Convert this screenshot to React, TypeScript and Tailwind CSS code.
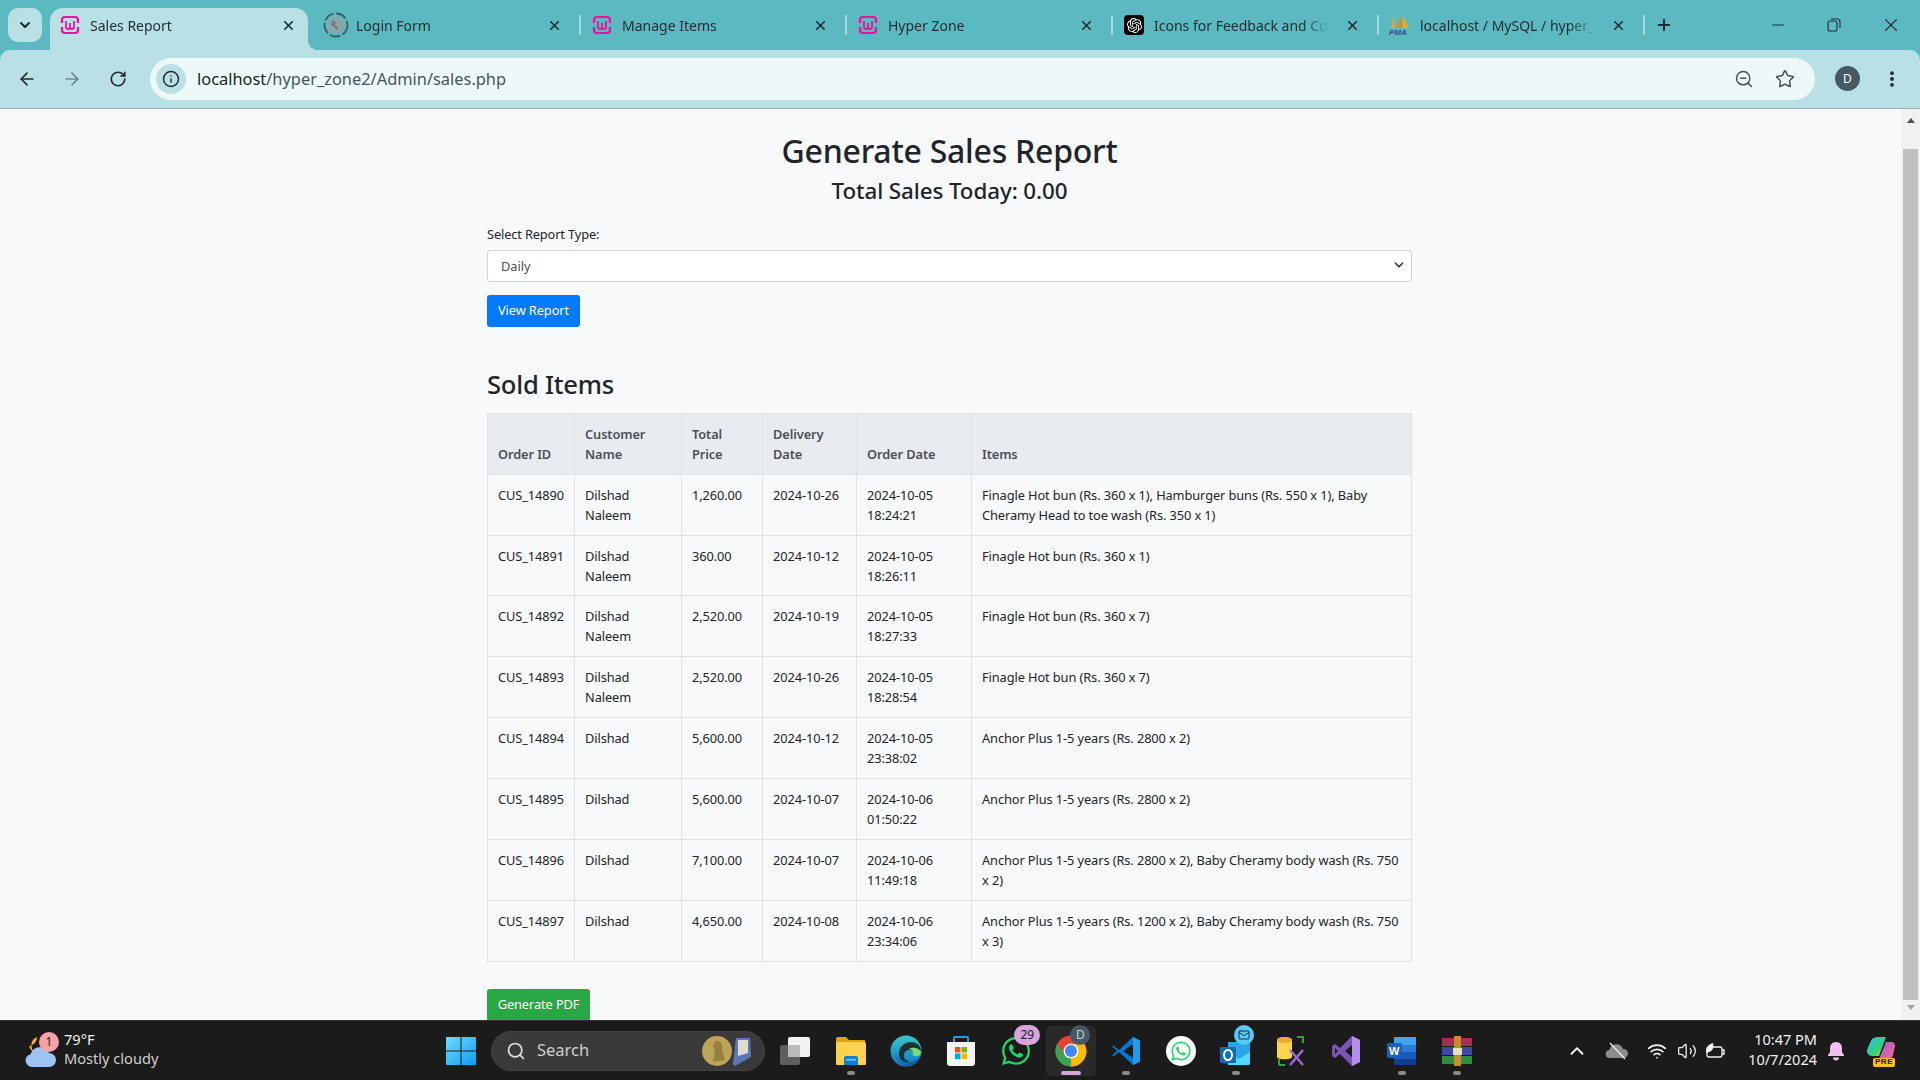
import React from 'react';
import { ArrowLeft, ArrowRight, ChevronDown, ChevronUp, Info, Mail, Minus, MoreVertical, Plus, RotateCw, Search, Star, Volume2, Wifi, X, ZoomOut } from 'lucide-react';
import { SiOpenai } from 'react-icons/si';
import { FaWhatsapp } from 'react-icons/fa';

const ROWS = [
  ['CUS_14890', 'Dilshad Naleem', '1,260.00', '2024-10-26', '2024-10-05 18:24:21', 'Finagle Hot bun (Rs. 360 x 1), Hamburger buns (Rs. 550 x 1), Baby Cheramy Head to toe wash (Rs. 350 x 1)'],
  ['CUS_14891', 'Dilshad Naleem', '360.00', '2024-10-12', '2024-10-05 18:26:11', 'Finagle Hot bun (Rs. 360 x 1)'],
  ['CUS_14892', 'Dilshad Naleem', '2,520.00', '2024-10-19', '2024-10-05 18:27:33', 'Finagle Hot bun (Rs. 360 x 7)'],
  ['CUS_14893', 'Dilshad Naleem', '2,520.00', '2024-10-26', '2024-10-05 18:28:54', 'Finagle Hot bun (Rs. 360 x 7)'],
  ['CUS_14894', 'Dilshad', '5,600.00', '2024-10-12', '2024-10-05 23:38:02', 'Anchor Plus 1-5 years (Rs. 2800 x 2)'],
  ['CUS_14895', 'Dilshad', '5,600.00', '2024-10-07', '2024-10-06 01:50:22', 'Anchor Plus 1-5 years (Rs. 2800 x 2)'],
  ['CUS_14896', 'Dilshad', '7,100.00', '2024-10-07', '2024-10-06 11:49:18', 'Anchor Plus 1-5 years (Rs. 2800 x 2), Baby Cheramy body wash (Rs. 750 x 2)'],
  ['CUS_14897', 'Dilshad', '4,650.00', '2024-10-08', '2024-10-06 23:34:06', 'Anchor Plus 1-5 years (Rs. 1200 x 2), Baby Cheramy body wash (Rs. 750 x 3)'],
];

const WampIcon = () => (
  <svg width="20" height="20" viewBox="0 0 20 20" fill="none" stroke="#f0109a" strokeWidth="2.2">
    <path d="M2 8V5a3 3 0 0 1 3-3h10a3 3 0 0 1 3 3v3M2 12v3a3 3 0 0 0 3 3h10a3 3 0 0 0 3-3v-3" />
    <path d="M6 6v6a2 2 0 0 0 4 0V8v4a2 2 0 0 0 4 0V6" strokeWidth="1.8" />
  </svg>
);

const SpinnerIcon = () => (
  <svg width="26" height="26" viewBox="0 0 26 26" fill="none" className="shrink-0">
    <circle cx="13" cy="13" r="11.5" stroke="#3f5a5f" strokeWidth="1.8" strokeDasharray="11 2.5" />
    <circle cx="13" cy="13" r="8" fill="#8ea3a6" />
    <path d="M9 8l4 2-1 3 3 2-1 3-3-3-3-2z" fill="#6d8285" />
  </svg>
);

const OpenAiIcon = () => (
  <div className="flex h-5 w-5 shrink-0 items-center justify-center rounded-[4px] bg-black text-white">
    <SiOpenai size={15} />
  </div>
);

const PmaIcon = () => (
  <svg width="22" height="22" viewBox="0 0 22 22" className="shrink-0">
    <path d="M5 2L2 14h4z" fill="#f7a21b" />
    <path d="M12 1L8 14h5z" fill="#f58a07" />
    <path d="M14 2l6 12h-6z" fill="#f9a825" />
    <text x="0" y="21" fontSize="8" fontWeight="700" fontStyle="italic" fill="#3b4a8c" fontFamily="Liberation Sans">PMA</text>
  </svg>
);

const TABS = [
  { title: 'Sales Report', icon: <WampIcon /> },
  { title: 'Login Form', icon: <SpinnerIcon /> },
  { title: 'Manage Items', icon: <WampIcon /> },
  { title: 'Hyper Zone', icon: <WampIcon /> },
  { title: 'Icons for Feedback and Comments', icon: <OpenAiIcon /> },
  { title: 'localhost / MySQL / hyper_zone2', icon: <PmaIcon /> },
];

const TabStrip = () => (
  <div className="flex h-[50px] shrink-0 bg-[#5bb9c2]">
    <div className="flex w-[50px] shrink-0 pl-2 pt-2">
      <div className="flex h-[34px] w-[34px] items-center justify-center rounded-[10px] bg-[#b9e1e5] text-[#1f2a2c]">
        <ChevronDown size={16} strokeWidth={3} />
      </div>
    </div>
    {TABS.map((tab, i) => (
      <div
        key={tab.title}
        className={`relative mt-2 flex h-[42px] shrink-0 items-center pb-[8px] pl-[10px] ${i === 0 ? 'mr-[8px] w-[258px] rounded-t-[13px] bg-[#b9e1e5] pr-[12px]' : 'w-[266px] pr-[20px]'}`}
      >
        <div className="flex w-[20px] shrink-0 items-center justify-center">{tab.icon}</div>
        <div className="ml-[10px] min-w-0 flex-1 overflow-hidden whitespace-nowrap text-[14px] text-[#1d2d30] [mask-image:linear-gradient(to_right,#000_85%,transparent)]">
          {tab.title}
        </div>
        <X size={15} strokeWidth={2.6} className="ml-[16px] shrink-0 text-[#1f2a2c]" />
        {i === 0 && <div className="absolute -right-[10px] bottom-0 h-[10px] w-[10px] bg-[radial-gradient(circle_at_100%_0,transparent_10px,#b9e1e5_10px)]" />}
        {i > 0 && <div className="absolute right-[1px] top-[7px] h-[20px] w-[2px] rounded bg-[#a6dbe0]" />}
      </div>
    ))}
    <div className="flex h-[42px] items-center pl-[9px] pt-2 text-[#1f2a2c]">
      <Plus size={18} strokeWidth={2.6} />
    </div>
    <div className="ml-auto flex text-[#1f2a2c]">
      <div className="flex w-[56px] items-center justify-center"><Minus size={18} strokeWidth={1.4} /></div>
      <div className="flex w-[56px] items-center justify-center">
        <svg width="14" height="14" viewBox="0 0 14 14" fill="none" stroke="currentColor" strokeWidth="1.1">
          <rect x="1" y="3" width="9" height="10" rx="2" />
          <path d="M4 1h6a3 3 0 0 1 3 3v6" />
        </svg>
      </div>
      <div className="flex w-[58px] items-center justify-center"><X size={22} strokeWidth={1.2} /></div>
    </div>
  </div>
);

const Toolbar = () => (
  <div className="shrink-0 bg-[#5bb9c2]">
    <div className="flex h-[59px] items-center rounded-t-[10px] border-b border-[#8fb3b7] bg-[#b9e1e5] pb-[1px]">
      <div className="flex w-[150px] shrink-0 items-center pl-[17px] text-[#1f2a2c]">
        <ArrowLeft size={20} strokeWidth={2} />
        <ArrowRight size={20} strokeWidth={2} className="ml-[25px] text-[#6f8a8e]" />
        <RotateCw size={18} strokeWidth={2.2} className="ml-[27px]" />
      </div>
      <div className="flex h-[42px] w-[1665px] shrink-0 items-center rounded-full bg-[#edf9f9] pl-[6px] pr-[20px]">
        <div className="flex h-[30px] w-[30px] items-center justify-center rounded-full bg-[#b9e1e5] text-[#1f2a2c]">
          <Info size={18} strokeWidth={2} />
        </div>
        <div className="ml-[11px] pt-[2px] text-[16.4px] text-[#43575b]">
          <span className="text-[#1b1f20]">localhost</span>/hyper_zone2/Admin/sales.php
        </div>
        <ZoomOut size={20} strokeWidth={1.8} className="ml-auto text-[#4a5154]" />
        <Star size={20} strokeWidth={1.8} className="ml-[21px] text-[#4a5154]" />
      </div>
      <div className="ml-[20px] flex h-[25px] w-[25px] items-center justify-center rounded-full bg-[#455a64] text-[12px] text-white">D</div>
      <MoreVertical size={20} strokeWidth={2.6} className="ml-[22px] text-[#1f2a2c]" />
    </div>
  </div>
);

const ReportTable = () => (
  <table className="w-[925px] table-fixed border-collapse text-[12.8px] leading-[20px] tracking-[-0.09px] text-[#212529]">
    <colgroup>
      <col className="w-[87px]" />
      <col className="w-[107px]" />
      <col className="w-[81px]" />
      <col className="w-[94px]" />
      <col className="w-[115px]" />
      <col />
    </colgroup>
    <thead>
      <tr className="h-[61px] bg-[#e9ecef] text-[#495057]">
        {['Order ID', 'Customer Name', 'Total Price', 'Delivery Date', 'Order Date', 'Items'].map((h) => (
          <th key={h} className="border border-[#dee2e6] px-[10px] pb-[10px] pt-[9px] text-left align-bottom font-semibold">{h}</th>
        ))}
      </tr>
    </thead>
    <tbody>
      {ROWS.map((row, r) => (
        <tr key={row[0]} className={r === 1 ? 'h-[60px]' : 'h-[61px]'}>
          {row.map((cell, i) => (
            <td key={i} className="border border-[#dee2e6] px-[10px] pb-[9px] pt-[10px] align-top">{cell}</td>
          ))}
        </tr>
      ))}
    </tbody>
  </table>
);

const Scrollbar = () => (
  <div className="flex w-[19px] shrink-0 flex-col items-center bg-[#f1f1f1]">
    <div className="mt-[9px] h-0 w-0 border-x-[4px] border-b-[5px] border-x-transparent border-b-[#505050]" />
    <div className="mt-[26px] h-[851px] w-[15px] bg-[#c1c1c1]" />
    <div className="mt-[5px] h-0 w-0 border-x-[4px] border-t-[5px] border-x-transparent border-t-[#a3a3a3]" />
  </div>
);

const WindowsIcon = () => (
  <svg width="30" height="30" viewBox="0 0 30 30">
    <defs>
      <linearGradient id="win" x1="0" y1="0" x2="1" y2="1">
        <stop offset="0" stopColor="#6fdcff" />
        <stop offset="1" stopColor="#0f9bf0" />
      </linearGradient>
    </defs>
    <path d="M1 1h13.5v13.5H0V2a1 1 0 0 1 1-1zM15.5 1H29a1 1 0 0 1 1 1v12.5H15.5zM0 15.5h14.5V29H1a1 1 0 0 1-1-1zM15.5 15.5H30V28a1 1 0 0 1-1 1H15.5z" fill="url(#win)" />
  </svg>
);

const WeatherIcon = () => (
  <svg width="32" height="36" viewBox="0 0 32 36">
    <path d="M13 4a9 9 0 0 0 1 17A12 12 0 0 1 5 13a9 9 0 0 0 8-9z" fill="#f4b62a" />
    <path d="M8 34a6.5 6.5 0 0 1-1.500-12.800A10 10 0 0 1 25 20a7 7 0 0 1 0 14z" fill="#9dc3f3" />
  </svg>
);

const MedalIcon = () => (
  <svg width="50" height="32" viewBox="0 0 50 32">
    <path d="M34 3h14l1 19-16 9-2-2z" fill="#5b78b8" />
    <path d="M36 5h10l0 13-10 3z" fill="#e3dcc9" />
    <ellipse cx="15" cy="16" rx="15" ry="15" fill="#bca559" />
    <path d="M15 6c5 0 6 5 5 9l3 10-12 2 2-12c-3-3-2-9 2-9z" fill="#96803c" />
  </svg>
);

const TaskViewIcon = () => (
  <svg width="32" height="30" viewBox="0 0 32 30">
    <rect x="0" y="9" width="20" height="20" rx="2" fill="#5e5e5e" />
    <rect x="8" y="1" width="22" height="20" rx="2" fill="#f2f2f2" />
    <rect x="8" y="9" width="12" height="12" fill="#bcbcbc" />
  </svg>
);

const ExplorerIcon = () => (
  <svg width="32" height="30" viewBox="0 0 32 30">
    <path d="M1 3a2 2 0 0 1 2-2h8l3 3h16v4H1z" fill="#e3a20f" />
    <rect x="1" y="6" width="30" height="23" rx="1.500" fill="#fdd24f" />
    <path d="M9 22a2 2 0 0 1 2-2h10a2 2 0 0 1 2 2v7H9z" fill="#0f7fd1" />
    <rect x="11" y="23" width="10" height="1.500" fill="#7fc8f5" />
  </svg>
);

const EdgeIcon = () => (
  <svg width="32" height="32" viewBox="0 0 32 32">
    <defs>
      <linearGradient id="edgeA" x1="0" y1="0" x2="0" y2="1">
        <stop offset="0" stopColor="#37c9c6" />
        <stop offset="1" stopColor="#0f78c9" />
      </linearGradient>
      <linearGradient id="edgeB" x1="0" y1="0" x2="1" y2="1">
        <stop offset="0" stopColor="#1d8fd8" />
        <stop offset="1" stopColor="#0b4f9c" />
      </linearGradient>
    </defs>
    <circle cx="16" cy="16" r="15.500" fill="url(#edgeA)" />
    <path d="M31 19c-2 8-9 12-14 12-8 0-14-7-11-16 1 8 8 13 14 12 5 0 9-4 11-8z" fill="url(#edgeB)" />
    <path d="M31 17c0-6-4-10-10-10-7 0-13 6-12 13 1 6 7 8 11 7-4-1-7-4-6-8 1-3 4-5 7-4 3 1 3 3 3 5 2 2 6 1 7-3z" fill="#1b1b1b" opacity="0.85" />
    <path d="M31 17c0 3-3 5-6 4-2 0-3-1-2-3 0-3-2-4-4-4 3-2 7-1 9 0 2 1 3 2 3 3z" fill="#7ddc6f" />
  </svg>
);

const StoreIcon = () => (
  <svg width="30" height="32" viewBox="0 0 30 32">
    <path d="M8 7V3a1 1 0 0 1 1-1h12a1 1 0 0 1 1 1v4" fill="none" stroke="#18a3e8" strokeWidth="2" />
    <path d="M1 7h28v21a3 3 0 0 1-3 3H4a3 3 0 0 1-3-3z" fill="#f4f4f4" />
    <rect x="9" y="12" width="5.500" height="5.500" fill="#f25022" />
    <rect x="15.500" y="12" width="5.500" height="5.500" fill="#7fba00" />
    <rect x="9" y="18.500" width="5.500" height="5.500" fill="#00a4ef" />
    <rect x="15.500" y="18.500" width="5.500" height="5.500" fill="#ffb900" />
  </svg>
);

const ChromeIcon = () => (
  <svg width="32" height="32" viewBox="0 0 32 32">
    <circle cx="16" cy="16" r="15.500" fill="#e94235" />
    <path d="M16 16L2.600 23.800A15.500 15.500 0 0 0 16 31.500z" fill="#34a853" />
    <path d="M2.600 8.200A15.500 15.500 0 0 0 2.600 23.800L9 20z" fill="#34a853" />
    <path d="M16 16h15.500A15.500 15.500 0 0 1 16 31.500z" fill="#fbbc04" />
    <path d="M16 9h13.400A15.500 15.500 0 0 1 31.500 16H16z" fill="#fbbc04" />
    <circle cx="16" cy="16" r="7.500" fill="#fff" />
    <circle cx="16" cy="16" r="6" fill="#4285f4" />
  </svg>
);

const VscodeIcon = () => (
  <svg width="30" height="30" viewBox="0 0 30 30">
    <path d="M22 1l7 3.500v21L22 29 8 16 2.500 20.500 1 19.500l5-4.500-5-4.500 1.500-1L8 14z" fill="#0078d4" />
    <path d="M22 1l7 3.500v21L22 29z" fill="#1f9cf0" />
    <path d="M22 8L12 15l10 7z" fill="#1b1b1b" />
  </svg>
);

const WhatsappWhite = () => (
  <div className="flex h-[30px] w-[30px] items-center justify-center rounded-full bg-white text-[#25d366]">
    <FaWhatsapp size={22} />
  </div>
);

const OutlookIcon = () => (
  <svg width="32" height="30" viewBox="0 0 32 30">
    <path d="M8 6h22v21a2 2 0 0 1-2 2H8z" fill="#28a8ea" />
    <path d="M8 16l11 7 11-7v11a2 2 0 0 1-2 2H10a2 2 0 0 1-2-2z" fill="#50d9ff" />
    <rect x="0" y="11" width="16" height="16" rx="1.500" fill="#0f6cbd" />
    <ellipse cx="8" cy="19" rx="4" ry="5" fill="none" stroke="#fff" strokeWidth="2" />
  </svg>
);

const WorkbenchIcon = () => (
  <svg width="30" height="32" viewBox="0 0 30 32">
    <path d="M1 5c0-4 15-4 15 0v17c0 3-15 3-15 0z" fill="#fbd44e" />
    <ellipse cx="8.500" cy="5" rx="7.500" ry="3" fill="#e7a92f" />
    <path d="M21 2h6v6M3 30h6M3 24v6" fill="none" stroke="#3f9b3b" strokeWidth="2" />
    <path d="M14 15l13 15M27 15L14 30" stroke="#9c6cd0" strokeWidth="2.500" />
  </svg>
);

const VsIcon = () => (
  <svg width="30" height="32" viewBox="0 0 30 32">
    <path d="M21 1l8 4v22l-8 4L9 19l-5 4-3-2V11l3-2 5 4z" fill="#7c54b5" />
    <path d="M21 1l8 4v22l-8 4z" fill="#b58ee8" />
    <path d="M21 10l-7 6 7 6zM4 13v6l3-3z" fill="#1b1b1b" />
  </svg>
);

const WordIcon = () => (
  <svg width="30" height="30" viewBox="0 0 30 30">
    <path d="M7 1h21a1 1 0 0 1 1 1v7H7z" fill="#41a5ee" />
    <rect x="7" y="9" width="22" height="7" fill="#2b7cd3" />
    <rect x="7" y="16" width="22" height="7" fill="#185abd" />
    <path d="M7 23h22v5a1 1 0 0 1-1 1H8a1 1 0 0 1-1-1z" fill="#103f91" />
    <rect x="0" y="7" width="15" height="15" rx="1.500" fill="#1a5fbf" />
    <text x="2" y="19" fontSize="11" fontWeight="700" fill="#fff" fontFamily="Liberation Sans">W</text>
  </svg>
);

const WinrarIcon = () => (
  <svg width="30" height="30" viewBox="0 0 30 30">
    <rect x="0" y="2" width="30" height="8" fill="#a5304f" />
    <rect x="0" y="11" width="30" height="8" fill="#3d49a8" />
    <rect x="0" y="20" width="30" height="8" fill="#2f8d3e" />
    <rect x="12" y="0" width="7" height="30" fill="#c98a2a" />
    <rect x="11" y="12" width="9" height="7" fill="#e8dfc0" />
  </svg>
);

const OneDriveOff = () => (
  <svg width="24" height="20" viewBox="0 0 24 20">
    <path d="M5 17a4 4 0 0 1-.500-8A7 7 0 0 1 18 8a4.500 4.500 0 0 1 1 9z" fill="#8c8c8c" />
    <path d="M5 2l15 16" stroke="#e8e8e8" strokeWidth="1.400" />
  </svg>
);

const BatteryLeaf = () => (
  <svg width="22" height="20" viewBox="0 0 22 20" fill="none" stroke="#f2f2f2" strokeWidth="1.300">
    <rect x="3" y="6" width="15" height="10" rx="2" />
    <path d="M18 9h2v4h-2" />
    <path d="M2 11c0-5 3-8 7-9 1 4 0 8-4 9l-2 1z" fill="#f2f2f2" stroke="none" />
  </svg>
);

const CopilotIcon = () => (
  <div className="relative h-[30px] w-[30px]">
    <svg width="30" height="24" viewBox="0 0 30 24">
      <defs>
        <linearGradient id="copA" x1="0" y1="0" x2="1" y2="1">
          <stop offset="0" stopColor="#35c1f1" />
          <stop offset="0.6" stopColor="#2fd07a" />
          <stop offset="1" stopColor="#f5c518" />
        </linearGradient>
        <linearGradient id="copB" x1="0" y1="0" x2="1" y2="1">
          <stop offset="0" stopColor="#a55be0" />
          <stop offset="1" stopColor="#f56c8c" />
        </linearGradient>
      </defs>
      <path d="M12 1h8l-7 19H6a5 5 0 0 1-5-6l3-7a8 8 0 0 1 8-6z" fill="url(#copA)" />
      <path d="M20 6h5a4 4 0 0 1 4 4l-2 9a5 5 0 0 1-5 4h-9z" fill="url(#copB)" />
    </svg>
    <div className="absolute bottom-[-1px] left-[7px] flex h-[9px] w-[22px] items-center justify-center rounded-[2px] bg-[#f7c325] font-['Liberation_Sans'] text-[8px] font-bold tracking-[0.5px] text-[#1b1b1b]">PRE</div>
  </div>
);

const Badge = ({ children, className }: { children: React.ReactNode; className: string }) => (
  <div className={`absolute flex items-center justify-center rounded-full text-[12px] ${className}`}>{children}</div>
);

const APPS: { icon: React.ReactNode; dot?: boolean; active?: boolean; badge?: React.ReactNode }[] = [
  { icon: <TaskViewIcon /> },
  { icon: <ExplorerIcon />, dot: true },
  { icon: <EdgeIcon /> },
  { icon: <StoreIcon /> },
  { icon: <FaWhatsapp size={32} className="text-[#25d366]" />, badge: <Badge className="-top-[1px] left-[26px] h-[20px] w-[26px] bg-[#d9a3e0] text-[#1b1b1b]">29</Badge> },
  { icon: <ChromeIcon />, active: true, badge: <Badge className="-top-[1px] left-[27px] h-[20px] w-[20px] bg-[#455a64] text-[#c7d3d8]">D</Badge> },
  { icon: <VscodeIcon />, dot: true },
  { icon: <WhatsappWhite /> },
  { icon: <OutlookIcon />, dot: true, badge: <Badge className="-top-[1px] left-[25px] h-[20px] w-[20px] bg-[#5cc8f5] text-[#123]"><Mail size={12} strokeWidth={1.8} /></Badge> },
  { icon: <WorkbenchIcon /> },
  { icon: <VsIcon /> },
  { icon: <WordIcon />, dot: true },
  { icon: <WinrarIcon />, dot: true },
];

const Taskbar = () => (
  <div className="flex h-[60px] shrink-0 items-center border-t border-[#333] bg-[#1b1b1b] text-[#f2f2f2]">
    <div className="flex w-[446px] shrink-0 items-center pl-[24px]">
      <div className="relative">
        <WeatherIcon />
        <Badge className="left-[15px] top-[-1px] h-[20px] w-[20px] bg-[#f6a0a8] text-[#1b1b1b]">1</Badge>
      </div>
      <div className="ml-[8px] pb-[3px] text-[14.6px] leading-[19px]">
        <div>79°F</div>
        <div className="text-[#cfcfcf]">Mostly cloudy</div>
      </div>
    </div>
    <WindowsIcon />
    <div className="ml-[15px] flex h-[40px] w-[274px] shrink-0 items-center rounded-full border border-[#444] bg-[#3a3a3a] pl-[14px] pr-[12px]">
      <Search size={20} strokeWidth={2} className="text-[#e0e0e0]" />
      <span className="ml-[11px] text-[16.5px] text-[#d0d0d0]">Search</span>
      <div className="ml-auto"><MedalIcon /></div>
    </div>
    <div className="ml-[3px] flex">
      {APPS.map((app, i) => (
        <div key={i} className="relative flex h-[50px] w-[55.1px] items-center justify-center">
          {app.active && <div className="absolute inset-y-0 left-[3px] right-[3px] rounded-[5px] border border-[#2c2c2c] bg-[#292929]" />}
          <div className="relative flex h-[32px] w-[32px] items-center justify-center">{app.icon}</div>
          {app.badge}
          {app.dot && <div className="absolute bottom-[1px] h-[4px] w-[8px] rounded-full bg-[#8a8a8a]" />}
          {app.active && <div className="absolute bottom-[1px] h-[4px] w-[20px] rounded-full bg-[#d9a3e0]" />}
        </div>
      ))}
    </div>
    <div className="ml-auto flex items-center pr-[24px]">
      <ChevronUp size={22} strokeWidth={2} />
      <div className="ml-[17px]"><OneDriveOff /></div>
      <Wifi size={20} strokeWidth={2} className="ml-[18px]" />
      <Volume2 size={20} strokeWidth={1.5} className="ml-[10px]" />
      <div className="ml-[7px]"><BatteryLeaf /></div>
      <div className="ml-[22px] pb-[3px] text-right text-[14.5px] leading-[20px]">
        <div>10:47 PM</div>
        <div>10/7/2024</div>
      </div>
      <svg width="18" height="20" viewBox="0 0 18 20" className="ml-[10px]">
        <path d="M9 1c-4 0-6 3-6 6v4l-2 3v1h16v-1l-2-3V7c0-3-2-6-6-6z" fill="#efc1f0" />
        <path d="M6 16.500a3 3 0 0 0 6 0z" fill="#efc1f0" />
      </svg>
      <div className="ml-[21px]"><CopilotIcon /></div>
    </div>
  </div>
);

export default function App() {
  return (
    <div className="flex h-screen w-full flex-col overflow-hidden bg-[#f8f9fa] font-['Noto_Sans',sans-serif]">
      <TabStrip />
      <Toolbar />
      <div className="flex min-h-0 flex-1">
        <main className="min-w-0 flex-1 overflow-hidden pl-[487px]">
          <div className="w-[925px] text-[#212529]">
            <h1 className="mt-[20px] text-center text-[32px] font-medium leading-[44px] tracking-[-0.23px]">Generate Sales Report</h1>
            <h3 className="mt-[2px] text-center text-[22.4px] font-medium leading-[32px] tracking-[-0.1px]">Total Sales Today: 0.00</h3>
            <label className="mt-[17px] block text-[12.8px] leading-[20px] tracking-[-0.13px]">Select Report Type:</label>
            <div className="relative mt-[6px] flex h-[32px] items-center rounded-[3px] border border-[#ced4da] bg-white pl-[13px] pt-[2px] text-[12.8px] text-[#495057]">
              Daily
              <ChevronDown size={14} strokeWidth={3} className="absolute right-[5px] top-[7px] text-[#343a40]" />
            </div>
            <button className="mt-[13px] block h-[32px] w-[93px] rounded-[3px] bg-[#007bff] text-[12.8px] tracking-[-0.09px] text-white">View Report</button>
            <h2 className="mt-[40px] text-[25.6px] font-medium leading-[36px] tracking-[-0.24px]">Sold Items</h2>
            <div className="mt-[10px]"><ReportTable /></div>
            <button className="mt-[27px] block h-[32px] w-[103px] rounded-[3px] bg-[#28a745] text-[12.8px] tracking-[-0.09px] text-white">Generate PDF</button>
          </div>
        </main>
        <Scrollbar />
      </div>
      <Taskbar />
    </div>
  );
}
